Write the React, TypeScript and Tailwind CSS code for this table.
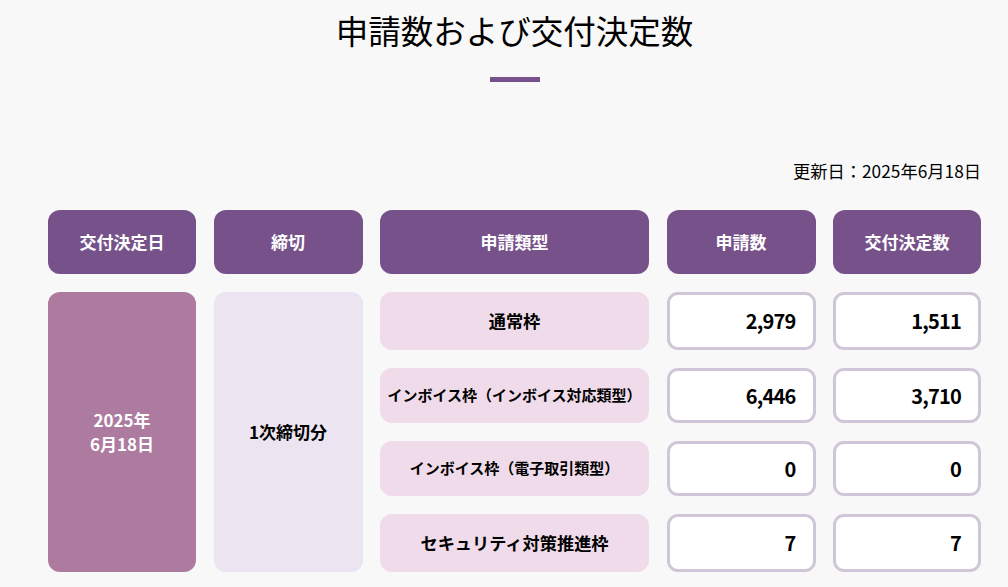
import React from "react";

const font = { fontFamily: '"Noto Sans CJK JP", "Noto Sans", sans-serif' };

const rows = [
  { type: "通常枠", small: false, a: "2,979", b: "1,511", h: "h-[58px]" },
  { type: "インボイス枠（インボイス対応類型）", small: true, a: "6,446", b: "3,710", h: "h-[55px]" },
  { type: "インボイス枠（電子取引類型）", small: true, a: "0", b: "0", h: "h-[55px]" },
  { type: "セキュリティ対策推進枠", small: false, a: "7", b: "7", h: "h-[58px]" },
];

export default function App() {
  return (
    <div className="w-[1008px] h-[587px] overflow-hidden bg-[#f8f8f8] text-black" style={font}>
      <div className="pl-[48px] pr-[27px]">
        <h1 className="pt-[9px] text-center text-[32.5px] leading-[42px] font-normal">申請数および交付決定数</h1>
        <div className="mx-auto mt-[26px] h-[5px] w-[50px] bg-[#77528a]" />
        <div className="mt-[78px] text-right text-[17.3px] leading-[22px]">更新日：2025年6月18日</div>
        <div className="mt-[28px] grid grid-cols-[148px_149px_269px_149px_148px] gap-x-[17.5px]">
          {["交付決定日", "締切", "申請類型", "申請数", "交付決定数"].map((t) => (
            <div key={t} className="flex h-[64px] items-center justify-center rounded-[12px] bg-[#77528a] text-[17px] font-bold text-white">
              {t}
            </div>
          ))}
        </div>
        <div className="mt-[18px] grid grid-cols-[148px_149px_269px_149px_148px] gap-x-[17.5px]">
          <div className="flex h-[280px] items-center justify-center rounded-[12px] bg-[#ad7ba0] text-center text-[17px] font-bold leading-[24px] text-white">
            2025年<br />6月18日
          </div>
          <div className="flex h-[280px] items-center justify-center rounded-[12px] bg-[#ede4f1] text-[17px] font-bold">
            1次締切分
          </div>
          <div className="col-span-3 flex flex-col gap-y-[18px]">
            {rows.map((r) => (
              <div key={r.type} className={`grid grid-cols-[269px_149px_148px] gap-x-[17.5px] ${r.h}`}>
                <div className={`flex items-center justify-center rounded-[12px] bg-[#efdbe9] font-bold ${r.small ? "text-[15px]" : "text-[17.2px]"}`}>
                  {r.type}
                </div>
                <div className="flex items-center justify-end rounded-[11px] border-[3px] border-[#cfc6d8] bg-white pr-[17px] text-[20px] font-bold tracking-[-0.8px]">
                  {r.a}
                </div>
                <div className="flex items-center justify-end rounded-[11px] border-[3px] border-[#cfc6d8] bg-white pr-[17px] text-[20px] font-bold tracking-[-0.8px]">
                  {r.b}
                </div>
              </div>
            ))}
          </div>
        </div>
      </div>
    </div>
  );
}
